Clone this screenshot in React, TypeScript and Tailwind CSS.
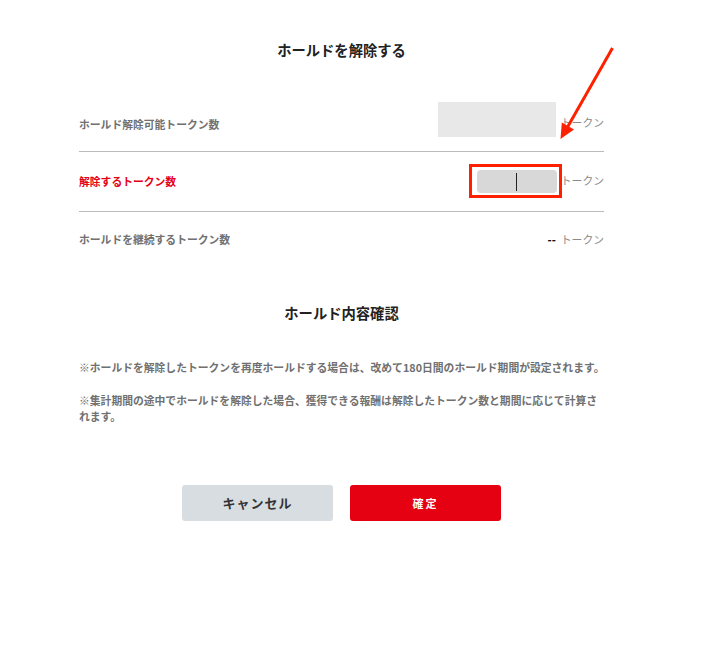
import React from "react";

export default function App() {
  const font = { fontFamily: '"Noto Sans CJK JP", "Noto Sans", sans-serif' };
  return (
    <div className="relative min-h-[660px] w-[719px] bg-white" style={font}>
      <div className="ml-[79px] w-[525px] pt-[40px]">
        <h1 className="text-center text-[14.3px] leading-[20px] font-bold text-[#222]">
          ホールドを解除する
        </h1>

        {/* Row 1 */}
        <div className="mt-[37px] flex h-[55px] items-center justify-between border-b border-[#bbbbbb]">
          <span className="text-[10.8px] font-bold text-[#707070]">ホールド解除可能トークン数</span>
          <div className="flex items-center gap-[5px]">
            <div className="-mt-[9px] h-[35px] w-[118px] bg-[#e8e8e8]" />
            <span className="mb-[4px] text-[10.8px] text-[#8a8a8a]">トークン</span>
          </div>
        </div>

        {/* Row 2 */}
        <div className="flex h-[60px] items-center justify-between border-b border-[#bbbbbb]">
          <span className="text-[10.8px] font-bold text-[#e60012]">解除するトークン数</span>
          <div className="flex items-center gap-[4px]">
            <div className="relative flex h-[23px] w-[80px] items-center justify-center rounded-[4px] bg-[#d8d8d8]">
              <div className="h-[18px] w-[1px] bg-[#222]" />
              <div className="absolute -left-[8px] -top-[6px] h-[34px] w-[93px] border-[3px] border-[#ff2000]" />
            </div>
            <span className="mb-[2px] text-[10.8px] text-[#8a8a8a]">トークン</span>
          </div>
        </div>

        {/* Row 3 */}
        <div className="flex h-[54px] items-center justify-between">
          <span className="text-[10.8px] font-bold text-[#707070]">ホールドを継続するトークン数</span>
          <div className="flex items-center gap-[5px]">
            <span className="text-[10.8px] font-black text-[#111]">--</span>
            <span className="text-[10.8px] text-[#8a8a8a]">トークン</span>
          </div>
        </div>

        <h2 className="mt-[37px] text-center text-[14.3px] leading-[20px] font-bold text-[#222]">
          ホールド内容確認
        </h2>

        <p className="mt-[36px] whitespace-nowrap text-[10.8px] leading-[16px] font-bold text-[#707070]">
          ※ホールドを解除したトークンを再度ホールドする場合は、改めて180日間のホールド期間が設定されます。
        </p>
        <p className="mt-[17px] text-[10.8px] leading-[16px] font-bold text-[#707070]">
          ※集計期間の途中でホールドを解除した場合、獲得できる報酬は解除したトークン数と期間に応じて計算されます。
        </p>

        <div className="mt-[61px] flex justify-center gap-[17px]">
          <button className="h-[36px] w-[151px] rounded-[3px] bg-[#d7dde1] text-[13px] font-bold tracking-[1px] text-[#333]">
            キャンセル
          </button>
          <button className="h-[36px] w-[151px] rounded-[3px] bg-[#e50012] text-[11px] font-bold tracking-[2px] text-white">
            確定
          </button>
        </div>
      </div>

      {/* Annotation arrow */}
      <svg className="absolute left-0 top-0" width="719" height="660" viewBox="0 0 719 660">
        <line x1="612.5" y1="48" x2="567" y2="128" stroke="#ff2000" strokeWidth="3" />
        <polygon points="560.5,139 561.8,122.5 574,129.5" fill="#ff2000" />
      </svg>
    </div>
  );
}
